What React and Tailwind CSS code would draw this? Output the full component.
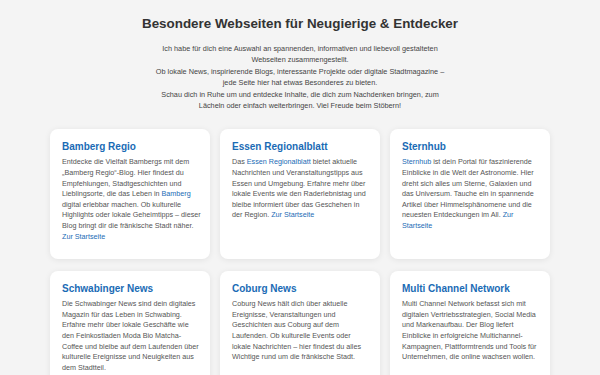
export default function App() {
  const link = "text-[#1a6bb5]";
  const cards = [
    {
      title: "Bamberg Regio",
      body: (
        <>
          Entdecke die Vielfalt Bambergs mit dem „Bamberg Regio“-Blog. Hier findest du Empfehlungen, Stadtgeschichten und Lieblingsorte, die das Leben in <span className={link}>Bamberg</span> digital erlebbar machen. Ob kulturelle Highlights oder lokale Geheimtipps – dieser Blog bringt dir die fränkische Stadt näher. <span className={link}>Zur Startseite</span>
        </>
      ),
    },
    {
      title: "Essen Regionalblatt",
      body: (
        <>
          Das <span className={link}>Essen Regionalblatt</span> bietet aktuelle Nachrichten und Veranstaltungstipps aus Essen und Umgebung. Erfahre mehr über lokale Events wie den Raderlebnistag und bleibe informiert über das Geschehen in der Region. <span className={link}>Zur Startseite</span>
        </>
      ),
    },
    {
      title: "Sternhub",
      body: (
        <>
          <span className={link}>Sternhub</span> ist dein Portal für faszinierende Einblicke in die Welt der Astronomie. Hier dreht sich alles um Sterne, Galaxien und das Universum. Tauche ein in spannende Artikel über Himmelsphänomene und die neuesten Entdeckungen im All. <span className={link}>Zur Startseite</span>
        </>
      ),
    },
    {
      title: "Schwabinger News",
      body: (
        <>
          Die Schwabinger News sind dein digitales Magazin für das Leben in Schwabing. Erfahre mehr über lokale Geschäfte wie den Feinkostladen Moda Bio Matcha-Coffee und bleibe auf dem Laufenden über kulturelle Ereignisse und Neuigkeiten aus dem Stadtteil.
        </>
      ),
    },
    {
      title: "Coburg News",
      body: (
        <>
          Coburg News hält dich über aktuelle Ereignisse, Veranstaltungen und Geschichten aus Coburg auf dem Laufenden. Ob kulturelle Events oder lokale Nachrichten – hier findest du alles Wichtige rund um die fränkische Stadt.
        </>
      ),
    },
    {
      title: "Multi Channel Network",
      body: (
        <>
          Multi Channel Network befasst sich mit digitalen Vertriebsstrategien, Social Media und Markenaufbau. Der Blog liefert Einblicke in erfolgreiche Multichannel-Kampagnen, Plattformtrends und Tools für Unternehmen, die online wachsen wollen.
        </>
      ),
    },
  ];

  return (
    <div className="min-h-[375px] bg-[#f4f4f4] font-['Liberation_Sans',Arial,sans-serif] pt-[14px] pb-6">
      <div className="w-[500px] mx-auto">
        <h1 className="text-center text-[13.4px] leading-[20px] font-bold text-[#333]">
          Besondere Webseiten für Neugierige &amp; Entdecker
        </h1>
        <p className="mt-[9px] mx-auto w-[298px] text-center text-[7.3px] leading-[11.4px] text-[#444]">
          Ich habe für dich eine Auswahl an spannenden, informativen und liebevoll gestalteten Webseiten zusammengestellt.
          <br />
          Ob lokale News, inspirierende Blogs, interessante Projekte oder digitale Stadtmagazine – jede Seite hier hat etwas Besonderes zu bieten.
          <br />
          Schau dich in Ruhe um und entdecke Inhalte, die dich zum Nachdenken bringen, zum Lächeln oder einfach weiterbringen. Viel Freude beim Stöbern!
        </p>
        <div className="mt-[18px] grid grid-cols-3 gap-x-[10px] gap-y-[12px]">
          {cards.map((c) => (
            <div
              key={c.title}
              className="bg-white rounded-[8px] shadow-[0_1px_6px_rgba(0,0,0,0.08)] pl-[12px] pr-[8.8px] pt-[11px] pb-[17px]"
            >
              <h2 className="text-[10px] leading-[14px] font-bold text-[#1a6bb5]">{c.title}</h2>
              <p className="mt-[3px] text-[7.2px] leading-[10.6px] text-[#555]">{c.body}</p>
            </div>
          ))}
        </div>
      </div>
    </div>
  );
}
